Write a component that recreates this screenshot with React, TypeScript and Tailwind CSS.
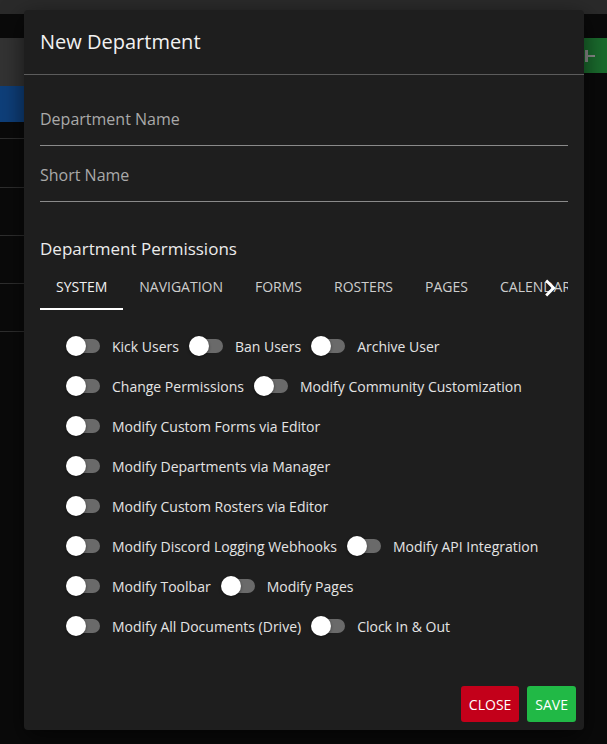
import React from "react"

const PERMISSION_ROWS: string[][] = [
  ["Kick Users", "Ban Users", "Archive User"],
  ["Change Permissions", "Modify Community Customization"],
  ["Modify Custom Forms via Editor"],
  ["Modify Departments via Manager"],
  ["Modify Custom Rosters via Editor"],
  ["Modify Discord Logging Webhooks", "Modify API Integration"],
  ["Modify Toolbar", "Modify Pages"],
  ["Modify All Documents (Drive)", "Clock In & Out"],
]

const TABS = ["System", "Navigation", "Forms", "Rosters", "Pages", "Calendar"]

const Toggle = function (): JSX.Element {
  return (
    <span className="relative block h-5 w-[34px] shrink-0">
      <span className="absolute left-[3px] right-0 top-[3px] h-[14px] rounded-full bg-[#6a6a6a]" />
      <span className="absolute left-0 top-0 size-5 rounded-full bg-white shadow-[0_1px_3px_rgba(0,0,0,0.45)]" />
    </span>
  )
}

const Background = function (): JSX.Element {
  return (
    <div className="flex h-full flex-col">
      <div className="h-[14px] bg-[#2a2a2a]" />
      <div className="flex flex-1 justify-between">
        <div className="w-[24px]">
          <div className="mt-[24px] h-[48px] bg-[#333333]" />
          <div className="h-[36px] bg-[#0e3f7a]" />
          <div className="mt-[16px] h-[49px] border-t border-[#2e2e2e]" />
          <div className="h-[48px] border-t border-[#2e2e2e]" />
          <div className="h-[48px] border-t border-[#2e2e2e]" />
          <div className="h-[48px] border-t border-[#2e2e2e]" />
          <div className="h-[48px] border-t border-[#2e2e2e]" />
        </div>
        <div className="w-[23px]">
          <div className="mt-[24px] flex h-[35px] items-center bg-[#1a6b2d] pl-[1px]">
            <span className="relative block size-[12px]">
              <span className="absolute left-0 top-[5px] h-[2px] w-[10px] bg-[#8c8c8c]" />
              <span className="absolute left-[0px] top-0 h-[12px] w-[3px] bg-[#8c8c8c]" />
            </span>
          </div>
        </div>
      </div>
    </div>
  )
}

export default function App(): JSX.Element {
  return (
    <div className="relative h-[744px] w-[607px] overflow-hidden bg-[#0a0a0a] font-['Open_Sans',sans-serif]">
      <Background />

      <div className="absolute left-[24px] top-[10px] flex h-[720px] w-[560px] flex-col rounded bg-[#1e1e1e] shadow-[0_8px_24px_rgba(0,0,0,0.6)]">
        <div className="flex h-[65px] items-center border-b border-[#5c5c5c] px-4">
          <h2 className="text-[20px] leading-none text-[#f2f2f2]">New Department</h2>
        </div>

        <div className="flex flex-col px-4">
          <div className="mt-[21px] flex h-[50px] items-center border-b border-[#8a8a8a] pb-[4px]">
            <span className="text-[16px] text-[#a9a9a9]">Department Name</span>
          </div>
          <div className="mt-[6px] flex h-[50px] items-center border-b border-[#8a8a8a] pb-[4px]">
            <span className="text-[16px] text-[#a9a9a9]">Short Name</span>
          </div>

          <h3 className="mt-[35px] text-[17px] leading-[24px] text-[#ececec]">Department Permissions</h3>

          <div className="relative mt-[1px] h-[48px] overflow-hidden">
            <div className="flex h-full whitespace-nowrap">
              {TABS.map((tab, i) => (
                <div
                  key={tab}
                  className={
                    i === 0
                      ? "relative flex h-full items-center px-4 text-[14px] uppercase text-[#f0f0f0]"
                      : "relative flex h-full items-center px-4 text-[14px] uppercase text-[#cdcdcd]"
                  }
                >
                  {tab}
                  {i === 0 && <span className="absolute bottom-0 left-0 right-0 h-[2px] bg-white" />}
                </div>
              ))}
            </div>
            <svg
              viewBox="0 0 24 24"
              className="absolute left-[493px] top-[9px] size-[34px] fill-white"
              aria-hidden="true"
            >
              <path d="M8.59 16.59 13.17 12 8.59 7.41 10 6l6 6-6 6z" />
            </svg>
          </div>

          <div className="mt-[16px] flex flex-col pl-[26px]">
            {PERMISSION_ROWS.map((row) => (
              <div key={row[0]} className="flex h-[40px] items-center">
                {row.map((label) => (
                  <div key={label} className="mr-[10px] flex items-center">
                    <Toggle />
                    <span className="ml-[12px] text-[14px] text-[#e4e4e4]">{label}</span>
                  </div>
                ))}
              </div>
            ))}
          </div>
        </div>

        <div className="mt-auto flex justify-end gap-2 pb-2 pr-2">
          <button type="button" className="h-[36px] rounded-[3px] bg-[#c3001a] px-2 text-[14px] uppercase text-white">
            Close
          </button>
          <button type="button" className="h-[36px] rounded-[3px] bg-[#21b946] px-2 text-[14px] uppercase text-white">
            Save
          </button>
        </div>
      </div>
    </div>
  )
}
